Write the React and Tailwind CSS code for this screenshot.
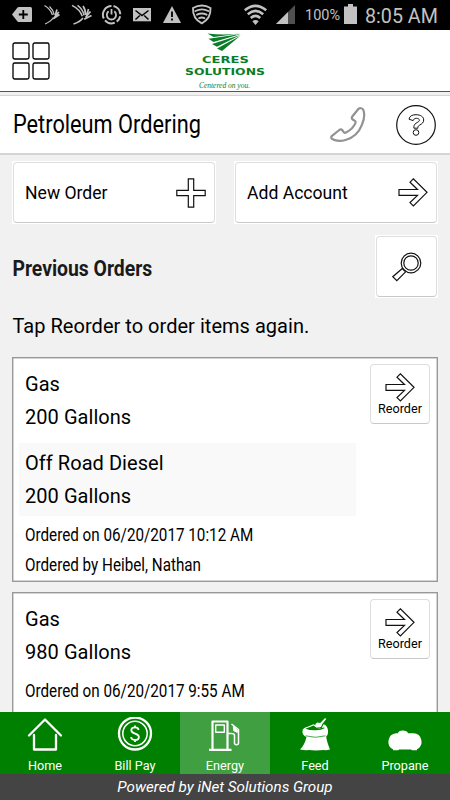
// App.jsx

import React from 'react';
import clsx from 'clsx';

const StatusBar = () => (
  <div className="flex h-[30px] shrink-0 bg-black text-[#c2c2c2]">
    <svg className="shrink-0" width="300" height="30" viewBox="0 0 300 30" fill="currentColor">
      {/* tag with plus */}
      <path d="M12 14.500 17.500 7.600Q18 7 19 7h11.500q1.500 0 1.500 1.500v12q0 1.500-1.500 1.500H19q-1 0-1.500-.6z" />
      <path d="M23.300 10v9M18.800 14.500h9" stroke="#000" strokeWidth="1.800" />
      {/* carrier wings */}
      <g fill="none" stroke="currentColor">
        <path d="M44.500 5.500q6 3.500 8 9.500M49.500 6.500q4 3.800 4.800 8.300M53.500 17.500q-2.500 4-8.500 6.500" strokeWidth="1.300" />
        <path d="M57 9.500l-1.700 5.500M58.800 12l-4.300 5M59.500 14.500l-6.300 4.300" strokeWidth="1.700" />
        <path d="M72 5.300q8 4 10.300 11M77.500 5.300q5.500 4 6.500 10M83 18q-3 4-9.500 6" strokeWidth="1.500" />
        <path d="M83 6q2.800 4 2.500 9M88.500 9l-2 7M90.500 11.500l-5 6M91.500 15.500l-7.300 3.700" strokeWidth="1.700" />
      </g>
      {/* sync ring */}
      <g fill="none" stroke="currentColor">
        <path d="M113.500 6.100a8.600 8.600 0 0 1 6.800 8.100M120.200 16.300a8.600 8.600 0 0 1-3.500 5.300M114.800 22.600a8.600 8.600 0 0 1-9.800-2.200M103.800 18.500a8.600 8.600 0 0 1 7.700-12.400" strokeWidth="2" />
        <path d="M108.600 11.300a4.600 4.600 0 1 0 5.700 0M111.500 9v5.500" strokeWidth="1.800" />
      </g>
      {/* mail */}
      <path d="M133 8h18v13.300h-18z" />
      <path d="M135.500 10.500 142 15.500 148.500 10.500M135.500 19.500l4.300-4M148.500 19.500l-4.300-4" stroke="#000" strokeWidth="1.500" fill="none" />
      {/* warning */}
      <path d="M172 6 181 23h-18z" />
      <path d="M172 11.500v5.500M172 18.500v2" stroke="#000" strokeWidth="1.800" />
      {/* shield */}
      <g fill="none" stroke="currentColor" strokeWidth="1.900" strokeLinecap="round">
        <path d="M193 8q9-5 17.500 0 .5 10.500-8.700 15.300Q192.500 18.500 193 8z" />
        <path d="M195.500 11q6.500-3.300 12.800 0M197 14.700q4.800-2.400 9.600 0M199.200 18.200q2.600-1.300 5.200 0" />
      </g>
      {/* wifi */}
      <g fill="none" stroke="currentColor" strokeWidth="2.600">
        <path d="M244.800 10.300q10.700-8.900 21.400 0M247.800 14.200q7.700-6.500 15.400 0M250.800 18q4.700-4.200 9.400 0" />
      </g>
      <path d="M252.300 21.300q3.200-2.800 6.400 0l-3.200 3.700z" />
      {/* signal */}
      <path d="M295 5v19h-19z" fill="#505050" />
      <path d="M288 12v12h-12z" />
    </svg>
    <span className="mt-[6px] ml-[5px] w-[39px] shrink-0 text-[14.500px] leading-[19px]">100%</span>
    <svg className="mt-1 shrink-0" width="13" height="21" viewBox="0 0 13 21" fill="currentColor">
      <path d="M4 0h5v2.500h4V20H0V2.500h4z" />
    </svg>
    <span className="mt-[4px] ml-[8px] origin-left scale-x-[0.960] text-[20.500px] leading-[24px] whitespace-nowrap">8:05 AM</span>
  </div>
);

const Logo = () => (
  <svg width="90" height="60" viewBox="180 31 90 60" fill="#0a7d28">
    <path d="M207.500 33.500Q224 35.500 241 33.400L213.500 37z" />
    <path d="M208.500 38.800 241 34 213.500 42z" />
    <path d="M212 44 240.500 34.900 217 46.800z" />
    <path d="M217 48.600 240 36 222 51z" />
    <g fontFamily="DejaVu Sans" fontWeight="700" fontSize="9.200">
      <text x="202" y="62.500" textLength="47" lengthAdjust="spacingAndGlyphs">CERES</text>
      <text x="185" y="75.200" textLength="80" lengthAdjust="spacingAndGlyphs">SOLUTIONS</text>
    </g>
    <text x="199" y="88" textLength="51" lengthAdjust="spacingAndGlyphs" fontFamily="Liberation Serif" fontStyle="italic" fontSize="8">Centered on you.</text>
  </svg>
);

const GridIcon = () => (
  <svg width="38" height="38" viewBox="0 0 38 38" fill="none" stroke="#000" strokeWidth="1.300">
    <rect x="1" y="1" width="16" height="16" rx="1.800" />
    <rect x="21" y="1" width="16" height="16" rx="1.800" />
    <rect x="1" y="21" width="16" height="16" rx="1.800" />
    <rect x="21" y="21" width="16" height="16" rx="1.800" />
  </svg>
);

const PhoneIcon = () => (
  <svg width="36" height="36" viewBox="0 0 36 36" fill="none" stroke="#929292" strokeWidth="2.200" strokeLinejoin="round">
    <path d="M28.500 1.800c1.200-.9 4-.8 4.700.8 1.700 4.200 1.100 9.800-1.300 15.200C29 25.300 22.500 31 15.500 33c-4.500 1.300-10 1-13.300-1-1.300-.9-1.300-2.200-.2-3.100l7.300-5.900c1.200-.9 2.500-.7 3.200.4l1 1.500c.6.9 1.500 1.100 2.600.5 4-2 7.600-5.200 9.300-9.300.4-1.100.1-1.900-.7-2.400l-1.700-1c-1.200-.7-1.500-1.700-.9-2.900z" />
  </svg>
);

const HelpIcon = () => (
  <svg width="40" height="40" viewBox="0 0 40 40" fill="none" stroke="#111">
    <circle cx="20" cy="20" r="19.300" strokeWidth="1.200" />
    <path d="M13 14.200c.4-3.300 3.500-4.500 7-4.500 4.400 0 7.700 2 7.700 5.300 0 2.700-2 4-3.900 5-1.300.7-1.900 1.300-1.900 2.400v.8h-4v-1.500c0-2.200 1.600-3.200 3.300-4.200 1.300-.7 2.200-1.300 2.200-2.300 0-1.200-1.300-1.900-3-1.900-1.800 0-2.800.9-3.200 2.300z" />
    <circle cx="20" cy="27.500" r="2.800" />
  </svg>
);

const PlusIcon = () => (
  <svg width="30" height="30" viewBox="0 0 30 30" fill="none" stroke="#111" strokeWidth="1.200">
    <path d="M12.300.8h5.400v11.500h11.500v5.400H17.700v11.500h-5.400V17.700H.8v-5.400h11.500z" />
  </svg>
);

const ArrowIcon = () => (
  <svg width="30" height="29" viewBox="0 0 30 29" fill="none" stroke="#111" strokeWidth="1.200">
    <path d="M1 11.500h18.500L12 4.200l3.400-3.400L29 14.300 15.400 28 12 24.600l7.500-7.200H1z" />
  </svg>
);

const SearchIcon = () => (
  <svg width="30" height="30" viewBox="0 0 30 30" fill="none" stroke="#111" strokeWidth="1.200">
    <circle cx="19" cy="11" r="9.800" />
    <circle cx="19" cy="11" r="7.200" />
    <path d="M10.300 16.500.8 24.700l4 4 8.800-8.800M10.300 16.500l3.300 3.400" />
  </svg>
);

const HomeIcon = () => (
  <svg width="36" height="36" viewBox="0 0 36 36" fill="none" stroke="#fff" strokeWidth="2.300" strokeLinecap="round" strokeLinejoin="round">
    <path d="M2 18.500 18 2.500l16 16M7 18v14.500h22V18" />
  </svg>
);

const CoinIcon = () => (
  <svg width="36" height="36" viewBox="0 0 36 36" fill="none" stroke="#fff">
    <circle cx="18" cy="16.500" r="16" strokeWidth="2.300" />
    <circle cx="18" cy="16.500" r="12.200" strokeWidth="1.500" />
    <path d="M21.700 13c-.3-1.700-1.600-2.600-3.700-2.600s-3.700 1-3.700 2.900c0 4.200 7.600 2.500 7.600 6.700 0 1.900-1.500 3-3.900 3s-3.700-1.200-3.900-3M18 8.500v2M18 23v2" strokeWidth="1.800" />
  </svg>
);

const PumpIcon = () => (
  <svg width="36" height="36" viewBox="0 0 36 36" fill="none" stroke="#fff" strokeWidth="2.200" strokeLinejoin="round">
    <path d="M2 32.800h22.500M5.500 32.800V4.500h15v28.300" />
    <path d="M8.700 8h8.600v7.300H8.700z" strokeWidth="1.400" />
    <path d="M24.500 7 31.500 12.500V26c0 2.200-4 2.200-4 0v-7.500c0-1.500-1-2-3-2H21" strokeWidth="1.500" />
    <path d="M26.300 9.500 30.300 13v2.500l-3.500-1.800z" fill="#fff" strokeWidth="1" />
  </svg>
);

const FeedIcon = () => (
  <svg width="36" height="36" viewBox="0 0 36 36" fill="#fff">
    <path d="M5.500 14q0-3 5-4.200l6-2.500 4.500 2.500-1.500 2 5-.2 2-4.300Q30.500 8.500 31 13.500q.3 4.500-1.800 6 .5 5 3.800 13-3.500 1-6.200.6-8 .8-15 0-4 .5-8.800-.6 4.500-4 6.500-12.500Q5 18 5.500 14z" />
    <path d="M8.500 11.500q3.500-1 8-3l5 3.500 5-1.500 1.500.5q-4 2.300-9 2.300-7 .3-10.500-1.800z" fill="#008000" />
    <path d="M18.500 9.500Q17.500 6.500 20.500 5.500l2.800.5L28 1l1.300 1-4 5q-.8 3.700-3.800 3.500z" />
    <path d="M8.500 18.800q10 3 20 0" fill="none" stroke="#008000" strokeWidth=".7" />
  </svg>
);

const TankIcon = () => (
  <svg width="36" height="36" viewBox="0 0 36 36" fill="#fff">
    <path d="M9 16.300h2q.5-2.500 4.500-2.700 4.800 0 5.500 2.700h5.500a8.500 8.500 0 0 1 3.500 16v.9h-5l-.8-.7H12l-.8.7H6v-.9A8.500 8.500 0 0 1 9 16.300z" />
  </svg>
);

const ActionButton = ({ label, icon }) => (
  <button className="h-[63px] flex-1 bg-white p-px">
    <span className="flex h-full w-full items-center justify-between rounded border border-[#dedede] border-b-[#c8c8c8] pr-2 pl-[11px] text-[17.600px]">
      <span className="pt-[2px] whitespace-nowrap">{label}</span>
      {icon}
    </span>
  </button>
);

const OrderCard = ({ items, date, by }) => (
  <div className="relative border border-[#999] bg-white px-[6px] pt-[5px] shadow-[inset_0_0_0_0.5px_#aaa]">
    {items.map((item, i) => (
      <div
        key={item.name}
        className={clsx(
          'mr-[75px] px-[6px] text-[20px] leading-[33px] tracking-[0.050px]',
          i % 2 === 1 ? 'h-[73px] bg-[#f9f9f9] pt-1' : 'h-[80px] pt-[5px]'
        )}
      >
        <p>{item.name}</p>
        <p>{item.qty}</p>
      </div>
    ))}
    <div className={clsx('min-h-[65px] px-[6px] text-[18px] leading-[30px]', items.length > 1 ? 'pt-[4px]' : '-mt-[2px]')}>
      <p className="origin-left scale-x-[0.846]">Ordered on {date}</p>
      {by && <p className="origin-left scale-x-[0.846]">Ordered by {by}</p>}
    </div>
    <button className="absolute top-[6px] right-[7px] flex h-[60px] w-[60px] flex-col items-center rounded border border-[#dedede] border-b-[#c8c8c8] bg-white pt-[8px]">
      <ArrowIcon />
      <span className="text-[12.600px] leading-[14px]">Reorder</span>
    </button>
  </div>
);

const orders = [
  {
    items: [
      { name: 'Gas', qty: '200 Gallons' },
      { name: 'Off Road Diesel', qty: '200 Gallons' },
    ],
    date: '06/20/2017 10:12 AM',
    by: 'Heibel, Nathan',
  },
  {
    items: [{ name: 'Gas', qty: '980 Gallons' }],
    date: '06/20/2017 9:55 AM',
  },
];

const tabs = [
  { label: 'Home', icon: <HomeIcon /> },
  { label: 'Bill Pay', icon: <CoinIcon /> },
  { label: 'Energy', icon: <PumpIcon />, active: true },
  { label: 'Feed', icon: <FeedIcon /> },
  { label: 'Propane', icon: <TankIcon /> },
];

const App = () => {
  return (
    <div className="flex h-[800px] w-[450px] flex-col overflow-hidden bg-[#f1f1f1] font-['Roboto',sans-serif] text-black">
      <StatusBar />

      {/* Brand header */}
      <header className="grid h-[62px] shrink-0 grid-cols-[1fr_90px_1fr] border-b border-[#555] bg-white pt-px">
        <div className="pt-[11px] pl-3">
          <GridIcon />
        </div>
        <Logo />
      </header>

      {/* Page title */}
      <div className="mt-[3px] flex h-[60px] shrink-0 items-center border-t border-b-2 border-[#d4d4d4] bg-white pr-[14px] pl-[12.500px]">
        <h1 className="flex-1 origin-left scale-x-[0.870] pt-px text-[25px] whitespace-nowrap">Petroleum Ordering</h1>
        <PhoneIcon />
        <span className="ml-[30px]">
          <HelpIcon />
        </span>
      </div>

      <main className="min-h-0 flex-1 overflow-hidden px-3 pt-[6px]">
        <div className="flex gap-[18px]">
          <ActionButton label="New Order" icon={<PlusIcon />} />
          <ActionButton label="Add Account" icon={<ArrowIcon />} />
        </div>

        <div className="mt-[11px] flex items-center justify-between">
          <h2 className="origin-left scale-x-[0.880] pt-[4px] pl-[0.500px] text-[22px] font-bold text-[#1a1a1a]">Previous Orders</h2>
          <button className="h-[63px] w-[63px] bg-white p-px">
            <span className="flex h-full w-full items-center justify-center rounded border border-[#dedede] border-b-[#c8c8c8]">
              <SearchIcon />
            </span>
          </button>
        </div>

        <p className="mt-[13px] pl-[0.500px] text-[20px] leading-[30px] tracking-[0.030px]">Tap Reorder to order items again.</p>

        <div className="mt-[16px] flex flex-col gap-[10px]">
          {orders.map((order) => (
            <OrderCard key={order.date} {...order} />
          ))}
        </div>
      </main>

      {/* Bottom tabs */}
      <nav className="grid h-[62px] shrink-0 grid-cols-5 bg-[#008000] text-white">
        {tabs.map((tab) => (
          <div key={tab.label} className={clsx('flex flex-col items-center pt-[5px]', tab.active && 'bg-[#409f40]')}>
            {tab.icon}
            <span className="mt-[5px] text-[12.700px] leading-[16px]">{tab.label}</span>
          </div>
        ))}
      </nav>
      <footer className="h-[26px] shrink-0 bg-[#444] text-center text-[15.200px] leading-[26px] text-white italic">
        Powered by iNet Solutions Group
      </footer>
    </div>
  );
};

export default App;
